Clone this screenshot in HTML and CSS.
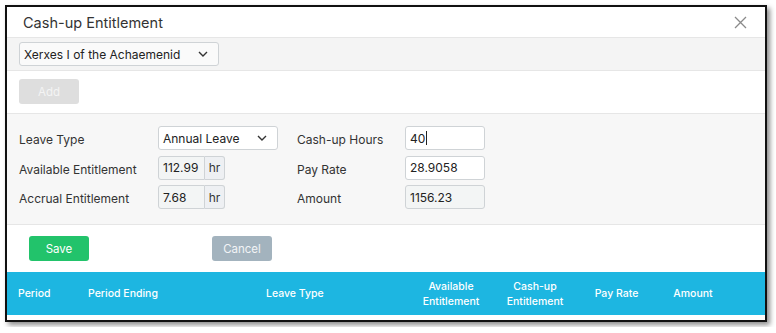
FILE: index.html
```html
<!DOCTYPE html>
<html lang="en">
<head>
<meta charset="UTF-8">
<meta name="viewport" content="width=device-width, initial-scale=1.0">
<title>Cash-up Entitlement</title>
<link rel="stylesheet" href="styles.css">
</head>
<body>

<div class="modal">
  <div class="modal-header">
    <h2>Cash-up Entitlement</h2>
    <span class="close">
      <svg width="13" height="13" viewBox="0 0 13 13"><path d="M1 1L12 12M12 1L1 12" stroke="#8a8a8a" stroke-width="1.3" fill="none"/></svg>
    </span>
  </div>

  <div class="employee-bar">
    <div class="select employee-select">
      <span>Xerxes I of the Achaemenid</span>
      <svg width="10" height="6" viewBox="0 0 10 6"><path d="M1 1L5 5L9 1" stroke="#333" stroke-width="1.4" fill="none"/></svg>
    </div>
  </div>

  <div class="add-bar">
    <button class="btn btn-add" disabled>Add</button>
  </div>

  <!-- leave form -->
  <div class="form-area">
    <div class="form-grid">
      <label>Leave Type</label>
      <div class="select leave-select">
        <span>Annual Leave</span>
        <svg width="10" height="6" viewBox="0 0 10 6"><path d="M1 1L5 5L9 1" stroke="#333" stroke-width="1.4" fill="none"/></svg>
      </div>
      <label>Cash-up Hours</label>
      <div class="input"><span>40</span><span class="caret"></span></div>

      <label>Available Entitlement</label>
      <div class="input-group">
        <div class="input readonly">112.99</div>
        <div class="addon">hr</div>
      </div>
      <label>Pay Rate</label>
      <div class="input">28.9058</div>

      <label>Accrual Entitlement</label>
      <div class="input-group">
        <div class="input readonly">7.68</div>
        <div class="addon">hr</div>
      </div>
      <label>Amount</label>
      <div class="input readonly">1156.23</div>
    </div>
  </div>

  <div class="form-footer">
    <button class="btn btn-save">Save</button>
    <button class="btn btn-cancel">Cancel</button>
  </div>

  <div class="table-head">
    <div class="th">Period</div>
    <div class="th">Period Ending</div>
    <div class="th">Leave Type</div>
    <div class="th center">Available<br>Entitlement</div>
    <div class="th center">Cash-up<br>Entitlement</div>
    <div class="th center">Pay Rate</div>
    <div class="th center">Amount</div>
  </div>
  <div class="table-body"></div>
</div>

</body>
</html>
```

FILE: styles.css
```css
body {
  margin: 0;
  padding: 5px;
  background-color: #fff;
  font-family: Inter, "Noto Sans", sans-serif;
  color: #333;
}

.modal {
  width: 758px;
  border: 2px solid #111;
  background-color: #fff;
  box-shadow: 3px 3px 5px rgba(0,0,0,0.45);
}

.modal-header {
  height: 30px;
  display: flex;
  align-items: center;
  justify-content: space-between;
  padding: 0 16px 0 16px;
  border-bottom: 1px solid #e6e6e6;
}
.modal-header h2 {
  margin: 0;
  font-size: 14.5px;
  font-weight: 400;
  color: #333;
}
.close {
  display: flex;
  margin-right: 2px;
}

.employee-bar {
  background-color: #f4f4f4;
  padding: 4px 12px;
  border-bottom: 1px solid #e6e6e6;
}

.select {
  box-sizing: border-box;
  height: 24px;
  display: flex;
  align-items: center;
  justify-content: space-between;
  padding: 0 10px 0 4px;
  border: 1px solid #cfd3d6;
  border-radius: 3px;
  background-color: #fafafa;
  font-size: 12px;
  color: #222;
}
.employee-select {
  width: 200px;
}
.leave-select {
  width: 120px;
  background-color: #fff;
}

.add-bar {
  display: flex;
  padding: 8px 12px 9px;
  border-bottom: 1px solid #e6e6e6;
}

.btn {
  width: 60px;
  height: 25px;
  border: none;
  border-radius: 3px;
  font-family: inherit;
  font-size: 11.5px;
  color: #fff;
  cursor: pointer;
}
.btn-add {
  background-color: #dedede;
  color: #f4f4f4;
}
.btn-save {
  background-color: #22c36b;
}
.btn-cancel {
  background-color: #a3b3be;
  color: #f2f4f6;
}

.form-area {
  background-color: #f7f7f7;
  padding: 12px 12px 15px;
  border-bottom: 1px solid #e6e6e6;
}
.form-grid {
  display: grid;
  grid-template-columns: 139px 139px 108px 80px;
  grid-auto-rows: 24px;
  row-gap: 5.5px;
  align-items: center;
}
.form-grid label {
  font-size: 12px;
  color: #333;
  padding-top: 3px;
}

.input {
  box-sizing: border-box;
  height: 24px;
  display: flex;
  align-items: center;
  padding: 0 4px;
  border: 1px solid #cfd3d6;
  border-radius: 3px;
  background-color: #fff;
  font-size: 12px;
  color: #222;
}
.input.readonly {
  background-color: #f3f5f5;
}
.caret {
  width: 1px;
  height: 14px;
  background-color: #222;
  margin-left: 1px;
}

.input-group {
  display: flex;
  width: 67px;
}
.input-group .input {
  width: 47px;
  border-radius: 3px 0 0 3px;
}
.addon {
  box-sizing: border-box;
  width: 20px;
  height: 24px;
  display: flex;
  align-items: center;
  justify-content: center;
  border: 1px solid #cfd3d6;
  border-left: none;
  border-radius: 0 3px 3px 0;
  background-color: #eef0f3;
  font-size: 12px;
  color: #333;
}

.form-footer {
  display: flex;
  gap: 123px;
  padding: 11px 22px 11px;
}

.table-head {
  height: 43px;
  display: grid;
  grid-template-columns: 70px 178px 143px 84px 84px 79px 74px;
  align-items: center;
  padding-left: 11px;
  background-color: #1db6e1;
}
.th {
  font-size: 10.5px;
  font-weight: 500;
  color: #fff;
  line-height: 15px;
}
.th.center {
  text-align: center;
}

.table-body {
  height: 5px;
}
```
